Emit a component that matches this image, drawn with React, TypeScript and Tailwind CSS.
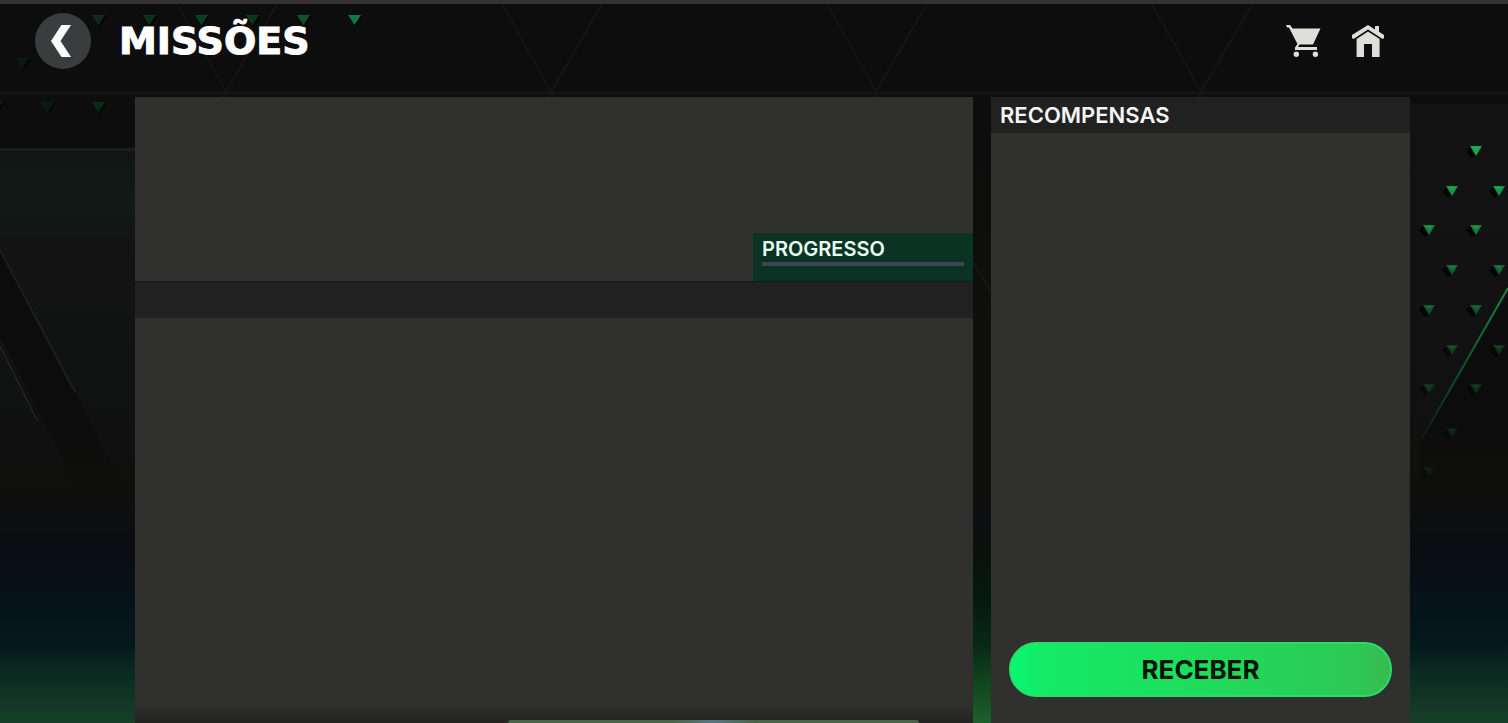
const headerTriangles = [
  { x: 98, y: 20, o: 0.3 },
  { x: 149, y: 20, o: 0.35 },
  { x: 201, y: 20, o: 0.45 },
  { x: 252, y: 20, o: 0.4 },
  { x: 303, y: 20, o: 0.6 },
  { x: 354, y: 20, o: 0.9 },
  { x: 22, y: 63, o: 0.15 },
  { x: -4, y: 107, o: 0.15 },
  { x: 47, y: 107, o: 0.18 },
  { x: 98, y: 107, o: 0.28 },
];

const sideTriangles = [
  { x: 1476, y: 151, o: 1 },
  { x: 1452, y: 191, o: 0.9 },
  { x: 1499, y: 191, o: 0.9 },
  { x: 1429, y: 230, o: 0.75 },
  { x: 1476, y: 230, o: 0.75 },
  { x: 1452, y: 270, o: 0.55 },
  { x: 1499, y: 270, o: 0.55 },
  { x: 1429, y: 310, o: 0.45 },
  { x: 1476, y: 310, o: 0.45 },
  { x: 1452, y: 350, o: 0.32 },
  { x: 1499, y: 350, o: 0.28 },
  { x: 1429, y: 389, o: 0.22 },
  { x: 1476, y: 389, o: 0.22 },
  { x: 1452, y: 433, o: 0.14 },
  { x: 1429, y: 472, o: 0.08 },
];

const beams = [226, 551, 876, 1201];

function Backdrop() {
  return (
    <svg
      className="absolute inset-0 size-full"
      viewBox="0 0 1508 723"
      preserveAspectRatio="none"
      aria-hidden="true"
    >
      <defs>
        <linearGradient id="base" x1="0" y1="0" x2="0" y2="1">
          <stop offset="0" stopColor="#0d0d0d" />
          <stop offset="0.69" stopColor="#0f0f0e" />
          <stop offset="0.76" stopColor="#0a0e12" />
          <stop offset="0.83" stopColor="#06121a" />
          <stop offset="0.89" stopColor="#04191d" />
          <stop offset="0.93" stopColor="#0a2a22" />
          <stop offset="0.97" stopColor="#143626" />
          <stop offset="1" stopColor="#164027" />
        </linearGradient>
        <linearGradient id="wall" x1="0" y1="0" x2="0" y2="1">
          <stop offset="0" stopColor="#111514" />
          <stop offset="0.15" stopColor="#101a16" />
          <stop offset="0.3" stopColor="#131313" />
          <stop offset="0.7" stopColor="#101111" />
          <stop offset="1" stopColor="#0f0f0e" />
        </linearGradient>
        <linearGradient id="shade" x1="0" y1="0" x2="0" y2="1">
          <stop offset="0" stopColor="#0c0c0c" />
          <stop offset="0.7" stopColor="#0c0c0c" />
          <stop offset="1" stopColor="#0f0f0e" />
        </linearGradient>
        <linearGradient id="rightWall" x1="0" y1="0" x2="0" y2="1">
          <stop offset="0" stopColor="#131313" />
          <stop offset="0.8" stopColor="#111111" />
          <stop offset="1" stopColor="#0f0f0e" />
        </linearGradient>
        <linearGradient id="grass" x1="0" y1="0" x2="0" y2="1">
          <stop offset="0" stopColor="#0c0f0d" />
          <stop offset="0.35" stopColor="#05180f" />
          <stop offset="0.6" stopColor="#082a14" />
          <stop offset="0.8" stopColor="#13461f" />
          <stop offset="1" stopColor="#1c602c" />
        </linearGradient>
        <linearGradient id="ray" x1="1508" y1="288" x2="1420" y2="442" gradientUnits="userSpaceOnUse">
          <stop offset="0" stopColor="#138a41" />
          <stop offset="0.6" stopColor="#0f4a28" />
          <stop offset="1" stopColor="#0f1511" />
        </linearGradient>
      </defs>

      <rect width="1508" height="723" fill="url(#base)" />
      <rect y="149" width="135" height="345" fill="url(#wall)" />
      <rect y="148" width="135" height="3" fill="#1a1f1e" />
      <path d="M0 250 L128 494 H80 L0 336 Z" fill="url(#shade)" />
      <path d="M0 250 L75 392" stroke="#1d1e1e" strokeWidth="2" />
      <path d="M0 346 L38 422" stroke="#2a2d2c" strokeWidth="1" />
      <rect x="1410" y="104" width="98" height="380" fill="url(#rightWall)" />
      <path d="M1508 288 L1420 442 V484 H1508 Z" fill="url(#shade)" />
      <path d="M1508 288 L1420 442" stroke="url(#ray)" strokeWidth="2" />
      <path d="M972 260 L992 294" stroke="#171717" strokeWidth="2" />
      <rect x="972" y="530" width="20" height="193" fill="url(#grass)" />

      {beams.map((x) => (
        <path
          key={x}
          d={`M${x - 49} 4 L${x + 3} 97 M${x + 51} 4 L${x - 3} 97`}
          stroke="#171717"
          strokeWidth="1.5"
          fill="none"
        />
      ))}
      <rect y="92" width="1508" height="2" fill="#151515" />

      {headerTriangles.map((t) => (
        <g key={`${t.x}-${t.y}`}>
          <path d={`M${t.x - 3} ${t.y - 4} h12 l-7 11 z`} fill="#060606" />
          <path d={`M${t.x - 6} ${t.y - 5} h13 l-6.5 10 z`} fill="#12853f" opacity={t.o} />
        </g>
      ))}
      {sideTriangles.map((t) => (
        <g key={`${t.x}-${t.y}`}>
          <path
            d={`M${t.x - 6} ${t.y - 4} l-4 4 l6 7 l6 -4 z`}
            fill="#030303"
            opacity={Math.min(1, t.o * 2)}
          />
          <path d={`M${t.x - 6} ${t.y - 5} h12 l-6 10 z`} fill="#16a34a" opacity={t.o} />
          <path d={`M${t.x - 4} ${t.y - 4} h8 l-4 3 z`} fill="#22c55e" opacity={t.o * 0.5} />
        </g>
      ))}
    </svg>
  );
}

function CartIcon() {
  return (
    <svg className="h-8 w-9" viewBox="0 0 36 32" fill="#dddfd8" aria-hidden="true">
      <path d="M0 0 H4 L6.5 3.5 H34.5 L27 19.5 H13.5 L12 22 H31 V25 H9 V22.5 L11.5 19 L4 4.5 L3 2.5 H1 Z" />
      <circle cx="10.3" cy="29.3" r="2.7" />
      <circle cx="29.4" cy="29.3" r="2.7" />
    </svg>
  );
}

function HomeIcon() {
  return (
    <svg className="size-8" viewBox="0 0 32 32" fill="#dddfd8" aria-hidden="true">
      <path d="M16 0 L23 4.4 V1 H27 V6.8 L32 10 V13 L30.5 14 L16 4.4 L1.5 14 L0 13 V10 Z" />
      <path d="M16 6.5 L27.6 14 V32 H20 V19 H12 V32 H4.6 V14 Z" />
    </svg>
  );
}

function Header() {
  return (
    <header className="flex items-center justify-between pt-[9px] pr-[124px] pb-7 pl-[35px]">
      <div className="flex items-center gap-7">
        <button
          type="button"
          aria-label="Voltar"
          className="flex size-14 items-center justify-center rounded-full bg-[#3a3d3e]"
        >
          <svg className="h-8 w-6" viewBox="0 0 24 32" fill="#ffffff" aria-hidden="true">
            <path d="M10.5 0 H20 L9.5 16 L20 32 H10.5 L0 16 Z" />
          </svg>
        </button>
        <h1 className="font-['DejaVu_Sans',sans-serif] text-[38px] leading-10 font-bold text-white [-webkit-text-stroke:1px_white]">
          MISSÕES
        </h1>
      </div>
      <nav className="flex items-center gap-[30px]">
        <a href="#loja" aria-label="Loja">
          <CartIcon />
        </a>
        <a href="#inicio" aria-label="Início">
          <HomeIcon />
        </a>
      </nav>
    </header>
  );
}

function MissionPanel() {
  return (
    <section className="flex grow-2 basis-0 flex-col bg-[#30302e]">
      <div className="flex h-[184px] items-end justify-end">
        <div className="h-12 w-[220px] bg-[#0b3324] px-[9px] pt-[3px]">
          <h2 className="text-xl leading-[26px] font-semibold text-[#eafff4]">PROGRESSO</h2>
          <div
            role="progressbar"
            aria-label="Progresso"
            aria-valuenow={0}
            className="h-1 bg-[#3c4653]"
          />
        </div>
      </div>
      <div className="h-[37px] border-t border-[#1a1a1a] bg-[#212121]" />
      <div className="mt-auto h-4 bg-linear-to-b from-[#30302e] to-[#242422]" />
      <div className="flex justify-end bg-[#242422] pr-[54px]">
        <div className="h-[3px] w-[411px] rounded-t-sm bg-linear-to-r from-[#4b6449] from-40% via-[#587680] via-50% to-[#4b6449] to-60%" />
      </div>
    </section>
  );
}

function RewardsPanel() {
  return (
    <section className="flex grow basis-0 flex-col bg-[#30302e]">
      <h2 className="bg-[#212121] pl-[9px] text-[22px] leading-9 font-semibold text-[#f5f5f5]">
        RECOMPENSAS
      </h2>
      <button
        type="button"
        className="mx-[18px] mt-auto mb-[26px] h-[55px] rounded-full border-2 border-[#2bdc68] bg-[linear-gradient(90deg,#08f873,#14ea66_8%,#1fdc5c_50%,#2dc853_92%,#38b94e)] text-[26px] font-bold text-[#04140a]"
      >
        RECEBER
      </button>
    </section>
  );
}

export default function App() {
  return (
    <div className="relative flex min-h-screen flex-col overflow-hidden bg-[#0d0d0d] font-[Inter,sans-serif]">
      <Backdrop />
      <div className="relative flex grow flex-col border-t-4 border-[#333333]">
        <Header />
        <main className="flex grow gap-[18px] pr-[98px] pl-[135px]">
          <MissionPanel />
          <RewardsPanel />
        </main>
      </div>
    </div>
  );
}
